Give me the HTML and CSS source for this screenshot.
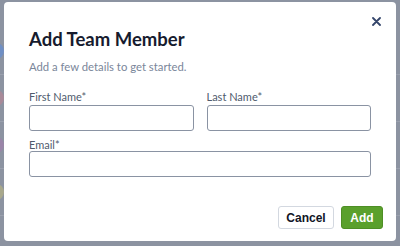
FILE: index.html
```html
<!DOCTYPE html>
<html lang="en">
<head>
  <meta charset="UTF-8" />
  <meta name="viewport" content="width=device-width, initial-scale=1.0">
  <title>Add Team Member</title>
  <link rel="stylesheet" href="styles.css">
</head>
<body>
  <div class="backdrop">
    <div class="bg-row"><span class="avatar blue"></span></div>
    <div class="bg-row"><span class="avatar pink"></span></div>
    <div class="bg-row"><span class="avatar purple"></span></div>
    <div class="bg-row"><span class="avatar yellow"></span></div>
  </div>

  <div class="modal">
    <button class="close" aria-label="Close">
      <svg width="9" height="9" viewBox="0 0 9 9"><path d="M1 1L8 8M8 1L1 8" stroke="#34456a" stroke-width="1.8" stroke-linecap="round"/></svg>
    </button>
    <div class="modal-body">
      <h2 class="title">Add Team Member</h2>
      <p class="subtitle">Add a few details to get started.</p>

      <div class="fields">
        <div class="field">
          <label>First Name*</label>
          <input type="text" />
        </div>
        <div class="field">
          <label>Last Name*</label>
          <input type="text" />
        </div>
        <div class="field wide">
          <label>Email*</label>
          <input type="text" />
        </div>
      </div>
    </div>
    <div class="modal-footer">
      <button class="btn cancel">Cancel</button>
      <button class="btn add">Add</button>
    </div>
  </div>
</body>
</html>
```

FILE: styles.css
```css
* { box-sizing: border-box; }
body { margin: 0; width: 400px; height: 246px; overflow: hidden; background: #8c93a1; font-family: Lato, "Liberation Sans", sans-serif; position: relative; }

.backdrop { display: flex; flex-direction: column; padding-top: 28px; }
.bg-row { height: 47px; border-bottom: 1px solid #9aa0ad; display: flex; align-items: center; }
.avatar { width: 16px; height: 16px; border-radius: 50%; margin-left: -12px; }
.blue { background: #6f8fc4; }
.pink { background: #a88a99; }
.purple { background: #9a85a8; }
.yellow { background: #a8a88c; }

.modal { position: absolute; left: 4px; top: 2px; width: 392px; height: 239px; background: #fff; border-radius: 4px; display: flex; flex-direction: column; }
.close { position: absolute; right: 15px; top: 15px; border: none; background: none; padding: 0; width: 9px; height: 9px; display: flex; }

.modal-body { padding: 25px 25px 0 25px; flex: 1; }
.title { margin: 0; font-size: 18.5px; font-weight: 700; color: #161b2e; line-height: 24px; }
.subtitle { margin: 8px 0 0; font-size: 11.3px; color: #7a869a; line-height: 16px; }

.fields { display: grid; grid-template-columns: minmax(0, 1fr) minmax(0, 1fr); column-gap: 13px; row-gap: 8px; margin-top: 16px; }
.field { display: flex; flex-direction: column; min-width: 0; }
.field.wide { grid-column: 1 / 3; }
.field label { font-size: 11px; color: #4f5b6e; line-height: 12px; margin-bottom: 2px; }
.field.wide label { margin-bottom: 0; }
.field input { width: 100%; min-width: 0; height: 26px; border: 1px solid #8a93a3; border-radius: 3px; padding: 4px 8px; font: inherit; }

.modal-footer { display: flex; justify-content: flex-end; gap: 7px; padding: 0 13px 12px 0; }
.btn { height: 23px; border-radius: 3px; font-family: "Liberation Sans", Arial, sans-serif; font-size: 12px; font-weight: 700; padding: 0; }
.cancel { width: 56px; background: #fff; border: 1px solid #d3d8e0; color: #111526; }
.add { width: 42px; background: #5aa02c; border: 1px solid #4e8e25; color: #fff; }
```
